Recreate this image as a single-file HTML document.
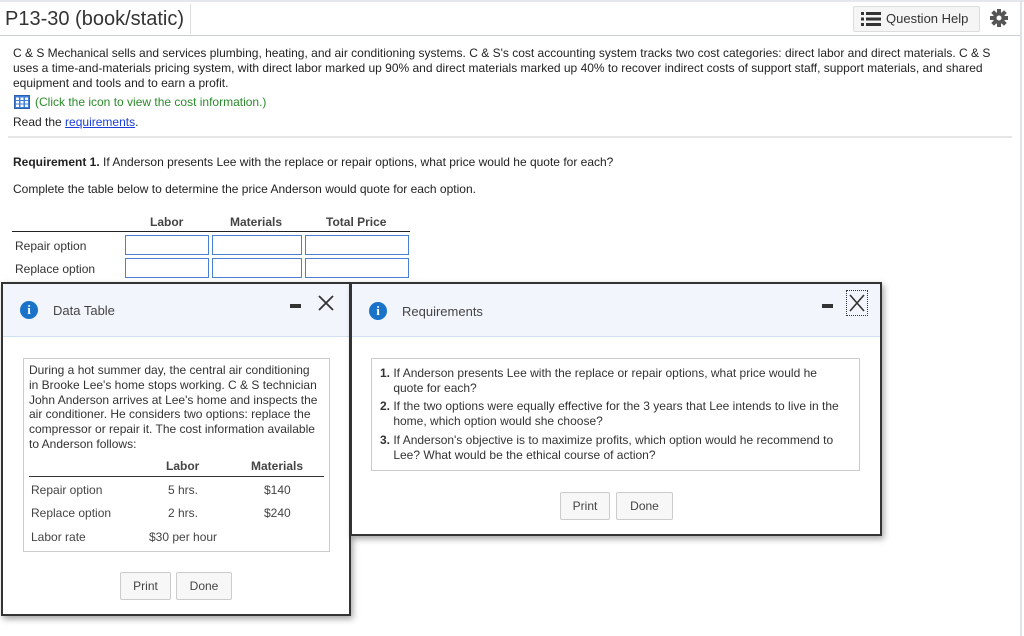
<!DOCTYPE html>
<html><head><meta charset="utf-8"><style>
*{margin:0;padding:0;box-sizing:border-box}
body{width:1024px;height:636px;overflow:hidden;background:#fff;font-family:"Liberation Sans",Arial,sans-serif;color:#222;position:relative;font-size:12px}
.a{position:absolute;white-space:nowrap}
.inp{position:absolute;border:1px solid #4a7fd6;height:20px;background:#fff}
.dlg{position:absolute;background:#fff;border:2px solid #333;box-shadow:2px 3px 6px rgba(0,0,0,.35)}
.hd{position:absolute;left:0;right:0;top:0;height:53px;background:#f2f6fc;border-bottom:1px solid #cfe0f2}
.ic{position:absolute;width:18px;height:18px;border-radius:50%;background:#1a73c8;color:#fff;font:bold 13px/18px "Liberation Serif",serif;text-align:center}
.box{position:absolute;border:1px solid #ccc}
.btn{position:absolute;border:1px solid #ccc;border-radius:2px;background:#f7f7f7;color:#444;font-size:12px;text-align:center;line-height:26px;height:28px}
.dt{color:#333}
</style></head><body>
<div style="position:absolute;left:0;top:0;width:1024px;height:2px;background:#e4e8ee"></div>
<div class="a" style="left:5px;top:8px;font-size:20px;color:#333">P13-30 (book/static)</div>
<div style="position:absolute;left:190px;top:4px;width:1px;height:30px;background:#ddd"></div>
<div style="position:absolute;left:0;top:35px;width:1020px;height:1px;background:#c8cdd6"></div>
<div style="position:absolute;left:1020px;top:0;width:2px;height:636px;background:#dfe3e8"></div>
<div style="position:absolute;left:853px;top:6px;width:127px;height:26px;border:1px solid #ddd;border-radius:2px;background:#f5f5f5"></div>
<svg class="a" style="left:861px;top:12px" width="20" height="14"><g fill="#333"><rect x="0" y="0" width="3" height="3"/><rect x="5" y="0" width="15" height="3"/><rect x="0" y="5.5" width="3" height="3"/><rect x="5" y="5.5" width="15" height="3"/><rect x="0" y="11" width="3" height="3"/><rect x="5" y="11" width="15" height="3"/></g></svg>
<div class="a" style="left:886px;top:11px;font-size:13px;color:#333">Question Help</div>
<svg class="a" style="left:990px;top:9px" width="18" height="18" viewBox="0 0 18 18"><g fill="#555" transform="translate(9 9)"><circle r="6"/><rect x="-2" y="-9" width="4" height="18"/><rect x="-2" y="-9" width="4" height="18" transform="rotate(45)"/><rect x="-2" y="-9" width="4" height="18" transform="rotate(90)"/><rect x="-2" y="-9" width="4" height="18" transform="rotate(135)"/><circle r="2.5" fill="#fff"/></g></svg>

<div class="a" style="left:13px;top:46px;line-height:15px">C &amp; S Mechanical sells and services plumbing, heating, and air conditioning systems. C &amp; S's cost accounting system tracks two cost categories: direct labor and direct materials. C &amp; S<br>uses a time-and-materials pricing system, with direct labor marked up 90% and direct materials marked up 40% to recover indirect costs of support staff, support materials, and shared<br>equipment and tools and to earn a profit.</div>
<svg class="a" style="left:14px;top:95px" width="16" height="14"><rect x="0.5" y="0.5" width="15" height="13" fill="#3d7fd9" stroke="#2a5fb0"/><g fill="#fff"><rect x="2" y="2.5" width="3" height="2.5"/><rect x="6.5" y="2.5" width="3" height="2.5"/><rect x="11" y="2.5" width="3" height="2.5"/><rect x="2" y="6" width="3" height="2.5"/><rect x="6.5" y="6" width="3" height="2.5"/><rect x="11" y="6" width="3" height="2.5"/><rect x="2" y="9.5" width="3" height="2.5"/><rect x="6.5" y="9.5" width="3" height="2.5"/><rect x="11" y="9.5" width="3" height="2.5"/></g></svg>
<div class="a" style="left:35px;top:95px;color:#2a8a2a">(Click the icon to view the cost information.)</div>
<div class="a" style="left:13px;top:115px">Read the <span style="color:#1a3fd8;text-decoration:underline">requirements</span>.</div>
<div style="position:absolute;left:8px;top:136px;width:1004px;height:2px;background:#e6e6e6"></div>

<div class="a" style="left:13px;top:155px"><b>Requirement 1.</b> If Anderson presents Lee with the replace or repair options, what price would he quote for each?</div>
<div class="a" style="left:13px;top:182px">Complete the table below to determine the price Anderson would quote for each option.</div>
<div class="a" style="left:150px;top:215px;color:#444;font-weight:bold">Labor</div>
<div class="a" style="left:230px;top:215px;color:#444;font-weight:bold">Materials</div>
<div class="a" style="left:326px;top:215px;color:#444;font-weight:bold">Total Price</div>
<div style="position:absolute;left:12px;top:231px;width:398px;height:1px;background:#222"></div>
<div class="a" style="left:15px;top:239px;color:#333">Repair option</div>
<div class="a" style="left:15px;top:262px;color:#333">Replace option</div>
<div class="inp" style="left:125px;top:235px;width:84px"></div><div class="inp" style="left:212px;top:235px;width:90px"></div><div class="inp" style="left:305px;top:235px;width:104px"></div>
<div class="inp" style="left:125px;top:258px;width:84px"></div><div class="inp" style="left:212px;top:258px;width:90px"></div><div class="inp" style="left:305px;top:258px;width:104px"></div>

<!-- Data Table dialog -->
<div class="dlg" style="left:1px;top:282px;width:350px;height:334px">
 <div class="hd"></div>
 <div class="ic" style="left:17px;top:17px">i</div>
 <div class="a" style="left:50px;top:19px;font-size:13px;color:#444">Data Table</div>
 <div style="position:absolute;left:287px;top:20px;width:11px;height:4px;background:#333"></div>
 <svg class="a" style="left:315px;top:11px" width="16" height="16"><path d="M1 1L15 15M15 1L1 15" stroke="#333" stroke-width="1.8"/></svg>
 <div class="box" style="left:20px;top:74px;width:307px;height:194px"></div>
 <div class="a dt" style="left:26px;top:79px;line-height:14.8px">During a hot summer day, the central air conditioning<br>in Brooke Lee's home stops working. C &amp; S technician<br>John Anderson arrives at Lee's home and inspects the<br>air conditioner. He considers two options: replace the<br>compressor or repair it. The cost information available<br>to Anderson follows:</div>
 <div class="a dt" style="left:163px;top:175px;font-weight:bold;color:#444">Labor</div>
 <div class="a dt" style="left:248px;top:175px;font-weight:bold;color:#444">Materials</div>
 <div style="position:absolute;left:26px;top:192px;width:295px;height:1px;background:#333"></div>
 <div class="a" style="left:28px;top:199px;color:#444">Repair option</div><div class="a" style="left:165px;top:199px;color:#444">5 hrs.</div><div class="a" style="left:261px;top:199px;color:#444">$140</div>
 <div class="a" style="left:28px;top:222px;color:#444">Replace option</div><div class="a" style="left:165px;top:222px;color:#444">2 hrs.</div><div class="a" style="left:261px;top:222px;color:#444">$240</div>
 <div class="a" style="left:28px;top:246px;color:#444">Labor rate</div><div class="a" style="left:146px;top:246px;color:#444">$30 per hour</div>
 <div class="btn" style="left:117px;top:288px;width:51px">Print</div>
 <div class="btn" style="left:173px;top:288px;width:56px">Done</div>
</div>

<!-- Requirements dialog -->
<div class="dlg" style="left:350px;top:282px;width:532px;height:254px">
 <div class="hd"></div>
 <div class="ic" style="left:17px;top:18px">i</div>
 <div class="a" style="left:50px;top:20px;font-size:13px;color:#444">Requirements</div>
 <div style="position:absolute;left:470px;top:20px;width:11px;height:4px;background:#333"></div>
 <div style="position:absolute;left:494px;top:6px;width:22px;height:26px;border:1px dotted #333"></div>
 <svg class="a" style="left:497px;top:10px" width="16" height="18"><path d="M1 1L15 17M15 1L1 17" stroke="#333" stroke-width="1.6"/></svg>
 <div class="box" style="left:19px;top:74px;width:489px;height:113px"></div>
 <div class="a dt" style="left:28px;top:82px;line-height:15px"><b>1.</b> If Anderson presents Lee with the replace or repair options, what price would he<br>&nbsp;&nbsp;&nbsp; quote for each?</div>
 <div class="a dt" style="left:28px;top:115px;line-height:15px"><b>2.</b> If the two options were equally effective for the 3 years that Lee intends to live in the<br>&nbsp;&nbsp;&nbsp; home, which option would she choose?</div>
 <div class="a dt" style="left:28px;top:149px;line-height:15px"><b>3.</b> If Anderson's objective is to maximize profits, which option would he recommend to<br>&nbsp;&nbsp;&nbsp; Lee? What would be the ethical course of action?</div>
 <div class="btn" style="left:208px;top:208px;width:50px">Print</div>
 <div class="btn" style="left:264px;top:208px;width:57px">Done</div>
</div>
</body></html>
